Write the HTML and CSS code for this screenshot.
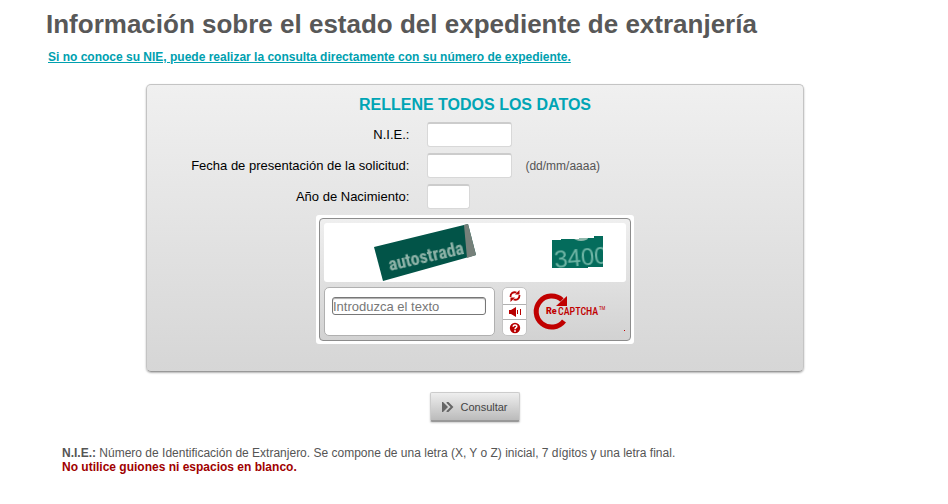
FILE: index.html
```html
<!DOCTYPE html>
<html lang="es">
<head>
    <meta charset="UTF-8">
    <meta name="viewport" content="width=device-width, initial-scale=1.0">
    <title>Información sobre el estado del expediente de extranjería</title>
    <link rel="stylesheet" href="styles.css">
</head>
<body>
    <main class="page">
        <h1>Información sobre el estado del expediente de extranjería</h1>
        <a class="alt-link" href="#">Si no conoce su NIE, puede realizar la consulta directamente con su número de expediente.</a>

        <form>
            <div class="panel">
                <h2>RELLENE TODOS LOS DATOS</h2>

                <div class="row">
                    <label for="nie">N.I.E.:</label>
                    <input type="text" id="nie" autocomplete="off">
                </div>
                <div class="row">
                    <label for="fecha">Fecha de presentación de la solicitud:</label>
                    <input type="text" id="fecha" autocomplete="off">
                    <span class="hint">(dd/mm/aaaa)</span>
                </div>
                <div class="row">
                    <label for="nacimiento">Año de Nacimiento:</label>
                    <input type="text" id="nacimiento" class="short" autocomplete="off">
                </div>

                <div class="captcha">
                    <div class="captcha-frame">
                        <svg class="captcha-image" viewBox="0 0 302 59" role="img" aria-label="Imagen de verificación">
                            <defs>
                                <filter id="soft"><feGaussianBlur stdDeviation="0.7"/></filter>
                                <clipPath id="plate"><path d="M228 17h9v-1h18v-1h15v-2h9v31h-15v1h-36z"/></clipPath>
                            </defs>
                            <path d="M50 24 144 1l8 31L59 58z" fill="#025448"/>
                            <path d="M144 1l8 31-9 3-3-33z" fill="#76807a"/>
                            <text class="sign" x="66" y="48" transform="rotate(-13 66 48)" filter="url(#soft)">autostrada</text>
                            <g clip-path="url(#plate)">
                                <path d="M228 13h51v32h-51z" fill="#046c5c"/>
                                <ellipse cx="257" cy="15" rx="7" ry="3" fill="#8fb8ac" filter="url(#soft)"/>
                                <text class="number" x="231" y="45" transform="rotate(-5 231 45)" filter="url(#soft)">3400</text>
                            </g>
                        </svg>

                        <div class="captcha-bar">
                            <div class="answer">
                                <input type="text" id="respuesta" placeholder="Introduzca el texto" aria-label="Introduzca el texto" autocomplete="off">
                            </div>
                            <div class="tools">
                                <button type="button" aria-label="Obtener otra imagen">
                                    <svg viewBox="0 0 12 12">
                                        <path d="M1.5 7C1.3 3.5 4 1.5 7.500 2.500" fill="none" stroke="#b80000" stroke-width="1.8"/>
                                        <path d="M10.500 0v4.500H6z" fill="#b80000"/>
                                        <path d="M10.500 5C10.700 8.500 8 10.500 4.500 9.500" fill="none" stroke="#b80000" stroke-width="1.8"/>
                                        <path d="M1.500 12V7.500H6z" fill="#b80000"/>
                                    </svg>
                                </button>
                                <button type="button" aria-label="Escuchar audio">
                                    <svg viewBox="0 0 12 12">
                                        <path d="M0 4h2l5-3v10L2 8H0z" fill="#b80000"/>
                                        <path d="M8.5 4v4M11.5 3v6" fill="none" stroke="#b80000" stroke-width="1"/>
                                    </svg>
                                </button>
                                <button type="button" aria-label="Ayuda">
                                    <svg viewBox="0 0 12 12">
                                        <circle cx="6" cy="6" r="5.2" fill="#b80000"/>
                                        <path d="M4.2 4.7C4.2 2.3 8 2.4 7.8 4.6 7.7 5.8 6 5.7 6 7.2" fill="none" stroke="#fff" stroke-width="1.5"/>
                                        <circle cx="6" cy="9" r=".9" fill="#fff"/>
                                    </svg>
                                </button>
                            </div>
                            <svg class="logo" viewBox="0 0 92 38" role="img" aria-label="reCAPTCHA">
                                <path d="M30 28A15.500 15.500 0 1 1 28 7" fill="none" stroke="#c00000" stroke-width="5"/>
                                <path d="M33 3v10H22z" fill="#c00000"/>
                                <text class="logo-re" x="12" y="21">Re</text>
                                <text class="logo-name" x="24" y="22">CAPTCHA</text>
                                <text class="logo-tm" x="65" y="17">TM</text>
                                <path d="M90 37h1v1h-1z" fill="#c00000"/>
                            </svg>
                        </div>
                    </div>
                </div>
            </div>

            <button type="submit" class="submit">
                <svg viewBox="0 0 12 10">
                    <path d="M0 0h1l5 5-5 5H0z" fill="#666"/>
                    <path d="M5 0l5 5-5 5" fill="none" stroke="#666" stroke-width="2"/>
                </svg>
                Consultar
            </button>
        </form>

        <p class="note"><strong>N.I.E.:</strong> Número de Identificación de Extranjero. Se compone de una letra (X, Y o Z) inicial, 7 dígitos y una letra final.</p>
        <p class="note warning">No utilice guiones ni espacios en blanco.</p>
    </main>
</body>
</html>
```
FILE: styles.css
```css
* {
    margin: 0;
    padding: 0;
    box-sizing: border-box;
}

body {
    font-family: "Liberation Sans", Arial, sans-serif;
    font-size: 12px;
    line-height: 14px;
    color: #555;
    background-color: #fff;
}

.page {
    padding: 8px 44px 8px 46px;
}

h1 {
    font-size: 26px;
    line-height: 32px;
    color: #585858;
}

.alt-link {
    display: block;
    width: fit-content;
    margin: 10px 0 20px 2px;
    font-weight: bold;
    color: #00a0af;
}

.panel {
    max-width: 658px;
    margin: 0 auto;
    padding: 10px 0 27px;
    border: 1px solid #c4c4c4;
    border-bottom-color: #999;
    border-radius: 5px;
    background: linear-gradient(#f0f0f0, #d6d6d6);
    box-shadow: 0 1px 2px rgba(0, 0, 0, 0.3);
}

h2 {
    margin-bottom: 7px;
    font-size: 16px;
    line-height: 20px;
    text-align: center;
    color: #00a5b5;
}

.row {
    display: grid;
    grid-template-columns: 40% auto 1fr;
    align-items: center;
    height: 25px;
    margin-bottom: 6px;
}

.row label {
    font-size: 13px;
    text-align: right;
    color: #000;
}

.row input {
    width: 85px;
    height: 25px;
    margin-left: 18px;
    padding: 0 4px;
    font: inherit;
    border: 1px solid #d8d8d8;
    border-top: 2px solid #ccc;
    border-radius: 3px;
    background-color: #fff;
}

.row .short {
    width: 43px;
}

.hint {
    margin-left: 13px;
}

.captcha {
    width: 318px;
    margin: 0 auto;
    padding: 3px;
    border-radius: 3px;
    background-color: #fff;
}

.captcha-frame {
    padding: 4px;
    border: 1px solid #8c8c8c;
    border-radius: 4px;
    background: linear-gradient(#efefef, #d2d2d2);
}

.captcha-image {
    display: block;
    width: 100%;
    border-radius: 3px;
    background-color: #fff;
}

.sign {
    font-family: "Roboto Condensed", Roboto, sans-serif;
    font-size: 18px;
    font-weight: bold;
    fill: #8fb3a8;
}

.number {
    font-family: "Liberation Sans", Arial, sans-serif;
    font-size: 24px;
    fill: #6fb5a5;
}

.captcha-bar {
    display: flex;
    align-items: center;
    height: 49px;
    margin-top: 5px;
}

.answer {
    width: 172px;
    height: 49px;
    padding: 9px 8px 0 7px;
    border: 1px solid #b0b0b0;
    border-radius: 5px;
    background-color: #fff;
}

.answer input {
    display: block;
    width: 100%;
    height: 18px;
    font: 13px "Liberation Sans", Arial, sans-serif;
    border: 1px solid #777;
    border-radius: 3px;
    box-shadow: inset 0 1px 1px #aaa;
}

.answer input::placeholder {
    color: #777;
}

.tools {
    width: 25px;
    height: 49px;
    margin: 0 7px;
    display: grid;
    grid-template-rows: repeat(3, 1fr);
    border: 1px solid #c4c4c4;
    border-radius: 5px;
    background-color: #fff;
    overflow: hidden;
}

.tools button {
    display: flex;
    align-items: center;
    justify-content: center;
    border: none;
    background: none;
    cursor: pointer;
}

.tools button + button {
    border-top: 1px solid #b0b0b0;
}

.tools svg {
    width: 12px;
    height: 12px;
}

.logo {
    width: 92px;
    height: 38px;
    flex-shrink: 0;
    overflow: visible;
}

.logo text {
    font-family: "Roboto Condensed", Roboto, sans-serif;
    fill: #c00000;
}

.logo .logo-re {
    font-family: Roboto, sans-serif;
    font-size: 9px;
    font-weight: 900;
}

.logo .logo-name {
    font-size: 10px;
    font-weight: 500;
}

.logo .logo-tm {
    font-size: 5px;
}

.submit {
    display: flex;
    align-items: center;
    justify-content: center;
    gap: 6px;
    width: 90px;
    height: 30px;
    margin: 20px auto 24px;
    font-family: inherit;
    font-size: 11px;
    color: #444;
    border: 1px solid #ccc;
    border-bottom: 2px solid #999;
    border-radius: 2px;
    background: linear-gradient(#eee, #bbb);
    box-shadow: 0 1px 2px rgba(0, 0, 0, 0.2);
    cursor: pointer;
}

.submit svg {
    width: 12px;
    height: 10px;
}

.note {
    margin-left: 16px;
}

.warning {
    font-weight: bold;
    color: #a00000;
}
```
